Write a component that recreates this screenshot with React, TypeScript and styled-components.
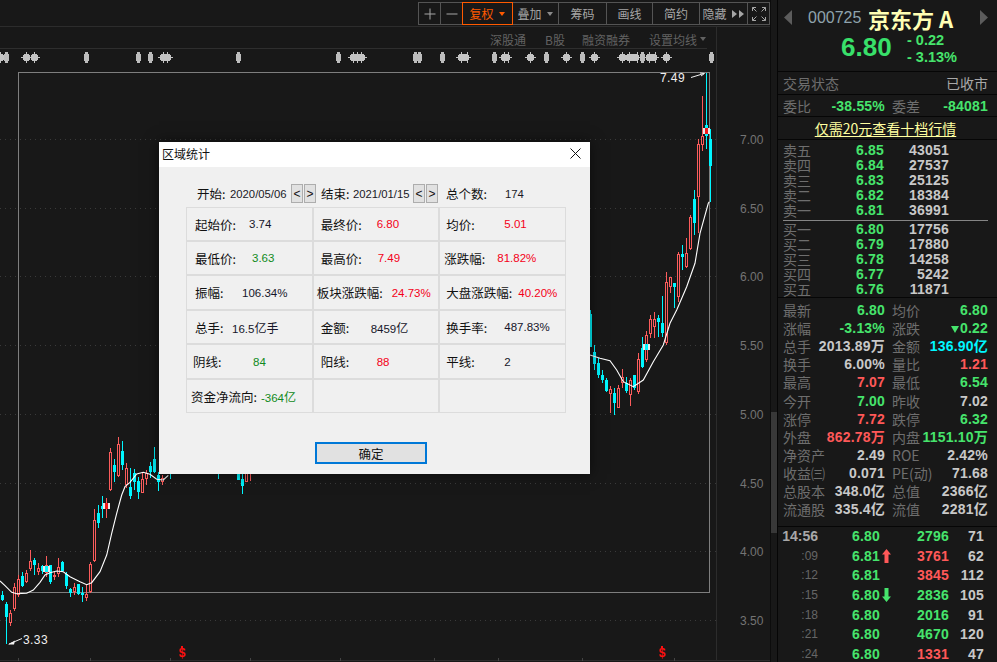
import React from "react";
import styled, { createGlobalStyle, css } from "styled-components";

const CJK = '"Noto Sans CJK SC", sans-serif';
const NUM = '"Liberation Sans", "Noto Sans CJK SC", sans-serif';
const GREEN = "#46e46c";
const RED = "#ff5858";
const CYAN = "#00f6ff";

const Global = createGlobalStyle`
  html, body { margin: 0; padding: 0; background: #181818; }
  * { box-sizing: border-box; }
`;

const Page = styled.div`
  position: relative;
  display: flex;
  width: 997px;
  height: 662px;
  overflow: hidden;
  background: #181818;
  font-family: ${CJK};
`;
const ChartColumn = styled.div`
  display: flex;
  flex-direction: column;
  width: 770px;
  flex: none;
`;
const Toolbar = styled.div`
  display: flex;
  justify-content: flex-end;
  height: 27px;
  flex: none;
  padding: 2px 0 0;
  border-bottom: 1px solid #2c2c2c;
`;
const ToolGroup = styled.div`
  display: flex;
  height: 23px;
  border: 1px solid #545454;
`;
const ToolButton = styled.div<{ $w: number; $active?: boolean }>`
  display: flex;
  align-items: center;
  justify-content: center;
  gap: 5px;
  width: ${(p) => p.$w}px;
  border-right: 1px solid #545454;
  font-size: 12px;
  color: #a6a6a6;
  &:last-child { border-right: none; }
  ${(p) =>
    p.$active &&
    css`
      color: #ff5a00;
      outline: 1px solid #ff5a00;
      border-right-color: transparent;
      position: relative;
    `}
`;
const Caret = styled.i<{ $color: string }>`
  display: block;
  width: 0;
  height: 0;
  border-left: 3px solid transparent;
  border-right: 3px solid transparent;
  border-top: 4px solid ${(p) => p.$color};
`;
const SubBar = styled.div`
  width: 717px;
  height: 22px;
  flex: none;
  border-right: 1px solid #2c2c2c;
`;
const SubTabs = styled.div`
  display: flex;
  justify-content: flex-end;
  align-items: center;
  gap: 19px;
  width: 707px;
  height: 22px;
  padding: 3px 1px 0 0;
  border-bottom: 1px solid #2e2e2e;
  font-size: 12px;
  color: #626262;
`;
const SubTab = styled.span`
  display: flex;
  align-items: center;
  gap: 3px;
`;
const LatinTab = styled(SubTab)`
  margin-right: -2px;
`;
const ChartSvg = styled.svg`
  display: block;
  width: 770px;
  height: 613px;
  flex: none;
`;
const ScrollStrip = styled.div`
  width: 7px;
  flex: none;
  padding-top: 412px;
  border-left: 1px solid #0c0c0c;
`;
const ScrollThumb = styled.div`
  height: 121px;
  background: #383838;
`;

const Panel = styled.div`
  display: flex;
  flex-direction: column;
  width: 220px;
  flex: none;
  border-left: 1px solid #060606;
  background: #181818;
`;
const Section = styled.div<{ $h: number }>`
  height: ${(p) => p.$h}px;
  flex: none;
  border-bottom: 1px solid #060606;
`;
const Head = styled(Section)`
  display: flex;
  flex-direction: column;
`;
const QuoteLine = styled.div`
  display: flex;
  align-items: center;
  height: 35px;
  padding-left: 6px;
  padding-right: 9px;
`;
const Code = styled.span`
  font: 16px ${NUM};
  color: #8fa3ad;
  margin-left: 16px;
  width: 60px;
`;
const Name = styled.span`
  font: 700 22px ${CJK};
  color: #ffffb4;
  flex: 1;
  white-space: pre;
  line-height: 1;
`;
const PriceLine = styled.div`
  display: flex;
  align-items: center;
  margin-top: -3px;
  padding-left: 63px;
`;
const BigPrice = styled.span`
  font: 700 26px ${NUM};
  color: #38e06a;
  width: 66px;
  padding-bottom: 3px;
`;
const Changes = styled.div`
  display: flex;
  flex-direction: column;
  margin-top: -1px;
  font: 700 14.5px/17px ${NUM};
  color: ${GREEN};
  white-space: pre;
`;
const InfoRow = styled(Section)`
  display: grid;
  grid-template-columns: 102px 96px;
  column-gap: 7px;
  padding-left: 5px;
  align-items: center;
`;
const Pair = styled.div`
  display: flex;
  justify-content: space-between;
  align-items: center;
  white-space: nowrap;
`;
const Label = styled.span`
  font-size: 14px;
  color: #6e6e6e;
  line-height: 18px;
`;
const Value = styled.span<{ $c?: string }>`
  font: 700 14px/18px ${NUM};
  letter-spacing: 0.2px;
  color: ${(p) => p.$c || "#c8c8c8"};
  white-space: nowrap;
`;
const StatusValue = styled.span`
  font-size: 14px;
  color: #a8a8a8;
`;
const Promo = styled(Section)`
  display: flex;
  align-items: center;
  justify-content: center;
  padding-right: 4px;
  font-size: 14px;
  color: #ffffa0;
  text-decoration: underline;
  text-underline-offset: 2px;
`;
const Book = styled(Section)`
  padding-top: 1px;
`;
const BookRow = styled.div`
  display: grid;
  grid-template-columns: 40px 61px 65px;
  height: 15px;
  padding-left: 5px;
  align-items: center;
  & > *:nth-child(n + 2) { text-align: right; }
`;
const BookLabel = styled.span`
  font-size: 14px;
  line-height: 15px;
  color: #6e6e6e;
`;
const BookDivider = styled.div`
  height: 1px;
  margin: 4px 9px -1px 5px;
  background: #858585;
`;
const Stats = styled(Section)`
  padding-top: 3px;
`;
const StatRow = styled.div`
  display: grid;
  grid-template-columns: 102px 96px;
  column-gap: 7px;
  height: 18.1px;
  padding-left: 5px;
  align-items: center;
`;
const SmallTri = styled.i`
  display: inline-block;
  width: 0;
  height: 0;
  margin-right: 1px;
  border-left: 4px solid transparent;
  border-right: 4px solid transparent;
  border-top: 7px solid ${GREEN};
`;
const Trades = styled.div`
  flex: 1;
  margin-top: -1px;
`;
const TradeRow = styled.div`
  display: grid;
  grid-template-columns: 40px 34px 36px 61px 35px;
  height: 19.7px;
  align-items: center;
`;
const TradeTime = styled.span<{ $main?: boolean }>`
  text-align: right;
  ${(p) =>
    p.$main
      ? css`font: 700 14px ${NUM}; color: #a8a8a8;`
      : css`font: 12px ${NUM}; color: #666;`}
`;
const TradePrice = styled.span`
  grid-column: 3;
  display: flex;
  align-items: center;
  gap: 2px;
  white-space: nowrap;
  & svg { flex: none; }
`;
const RightValue = styled(Value)`
  text-align: right;
`;

const Dialog = styled.div`
  position: absolute;
  left: 159px;
  top: 142px;
  width: 431px;
  height: 332px;
  background: #f0f0f0;
  box-shadow: 0 0 14px rgba(0, 0, 0, 0.55);
  color: #111;
`;
const TitleBar = styled.div`
  display: flex;
  align-items: center;
  justify-content: space-between;
  height: 25px;
  padding: 0 9px 2px 3px;
  background: #fff;
  font-size: 12px;
`;
const DialogBody = styled.div`
  padding: 17px 0 0 27px;
`;
const RangeRow = styled.div`
  display: flex;
  align-items: center;
  height: 19px;
  margin-bottom: 4px;
  font-size: 12.5px;
`;
const RangeText = styled.span<{ $w: number; $num?: boolean; $gap?: number }>`
  flex: none;
  width: ${(p) => p.$w}px;
  margin-left: ${(p) => p.$gap || 0}px;
  white-space: nowrap;
  ${(p) => p.$num && css`font: 11.3px ${NUM}; color: #1a1a26;`}
`;
const StepButton = styled.span`
  display: flex;
  align-items: center;
  justify-content: center;
  flex: none;
  width: 12px;
  height: 19px;
  margin-right: 1px;
  border: 1px solid #adadad;
  background: #e1e1e1;
  font: 12px ${NUM};
`;
const StatGrid = styled.div`
  display: grid;
  width: 380px;
  grid-template-columns: repeat(3, 1fr);
  grid-template-rows: 32px 32px 33px 32px 33px 32px;
  gap: 2px;
  padding: 1px;
  background: #dcdcdc;
`;
const Cell = styled.div<{ $pad: number }>`
  display: flex;
  align-items: center;
  padding-left: ${(p) => p.$pad}px;
  background: #f0f0f0;
  font-size: 12.5px;
  white-space: nowrap;
`;
const CellLabel = styled.span<{ $w: number }>`
  flex: none;
  width: ${(p) => p.$w}px;
`;
const CellValue = styled.span<{ $tone?: "red" | "green" }>`
  font: 11.5px ${NUM};
  color: ${(p) => (p.$tone === "red" ? "#f40018" : p.$tone === "green" ? "#0f8a20" : "#16162a")};
`;
const CnUnit = styled.span`
  font-family: ${CJK};
  font-size: 12px;
`;
const OkButton = styled.div`
  display: flex;
  align-items: center;
  justify-content: center;
  width: 112px;
  height: 22px;
  margin: 29px 0 0 129px;
  border: 2px solid #0078d7;
  background: #e1e1e1;
  font-size: 12.5px;
`;

type C = [number, number, number, number, number, "r" | "c"];
const leftCandles: C[] = [
  [7,513,543,524,540,"c"],[19,547,672,552,590,"c"],[31,570,617,580,608,"r"],[43,490,572,502,568,"r"],
  [55,465,532,478,525,"r"],[67,457,500,468,497,"c"],[79,450,490,460,487,"r"],[91,390,452,424,446,"r"],
  [103,413,465,420,434,"c"],[115,430,465,445,456,"r"],[127,435,462,438,452,"c"],[139,408,470,434,460,"r"],
  [151,435,492,436,486,"c"],[163,455,480,465,470,"r"],[175,413,472,442,462,"r"],[187,423,455,426,452,"c"],
  [199,455,507,462,498,"c"],[211,503,530,508,520,"c"],[223,490,525,500,515,"r"],[235,492,524,492,522,"c"],
  [247,500,546,520,524,"c"],[259,495,542,522,534,"r"],[271,425,518,432,516,"r"],[283,268,427,300,424,"r"],
  [295,255,323,280,308,"c"],[307,228,295,258,266,"c"],[319,235,293,250,266,"r"],[331,85,212,96,211,"r"],
  [343,118,185,135,155,"c"],[355,52,170,72,168,"r"],[367,63,150,93,135,"c"],[379,130,205,145,195,"r"],
  [391,145,236,202,228,"c"],[403,148,210,160,185,"c"],[415,170,236,183,215,"c"],[427,155,220,178,218,"r"],
  [439,150,195,160,178,"r"],[451,125,175,138,156,"c"],[463,82,160,117,155,"c"],[475,155,212,165,185,"c"],
  [487,165,195,175,185,"r"],[511,160,178,160,161,"c"],[655,160,178,160,161,"c"],[715,160,180,160,180,"c"],
  [727,160,222,178,198,"c"],[739,160,185,160,185,"r"],[751,160,183,160,161,"r"],
];
const rightCandles: C[] = [
  [31,750,862,762,862,"c"],[43,855,930,875,912,"c"],[55,895,953,908,945,"c"],[67,930,970,945,960,"c"],
  [79,955,997,960,992,"c"],[91,978,1060,988,1002,"r"],[103,985,1065,1000,1028,"c"],[115,975,1045,985,1043,"r"],
  [127,928,985,950,968,"r"],[139,950,1000,970,992,"c"],[151,955,1037,960,1005,"r"],[163,945,990,945,985,"c"],
  [175,880,1003,898,995,"r"],[187,830,925,865,920,"c"],[199,812,905,825,900,"r"],[211,765,835,778,823,"r"],
  [223,755,833,778,800,"r"],[235,765,830,775,787,"c"],[247,708,830,790,820,"c"],[259,635,855,667,850,"r"],
  [271,650,698,650,682,"r"],[283,670,745,670,681,"c"],[295,575,725,583,712,"r"],[307,555,630,582,590,"c"],
  [319,535,623,580,622,"r"],[331,465,570,472,568,"r"],[343,390,525,417,488,"c"],[355,237,520,253,412,"r"],
  [367,108,272,228,254,"r"],[379,38,268,195,227,"c"],[391,207,425,237,317,"c"],
];
const maLeft = [[0,483],[15,497],[35,517],[50,521],[80,520],[100,510],[120,487],[135,465],[150,458],[170,453],[190,455],[210,470],[240,485],[260,494],[275,488],[300,455],[320,405],[335,340],[350,280],[365,225],[375,200],[390,187],[410,162],[430,157],[450,163],[470,178],[490,180],[505,166]];
const maRight = [[30,885],[60,895],[90,902],[110,930],[130,965],[160,980],[190,960],[220,905],[250,855],[270,790],[290,750],[320,680],[345,610],[360,520],[385,430],[388,425]];

const Candles = ({ data, ox, oy }: { data: C[]; ox: number; oy: number }) => (
  <g shapeRendering="crispEdges">
    {data.map(([zx, wt, wb, bt, bb, k], i) => {
      const x = ox + Math.round((zx - 1) / 3);
      const col = k === "r" ? "#fb5c5c" : CYAN;
      const y = (v: number) => Math.round(oy + v / 3);
      const h = Math.max(1, y(bb) - y(bt));
      return (
        <g key={i}>
          <rect x={x} y={y(wt)} width={1} height={Math.max(1, y(wb) - y(wt))} fill={col} />
          <rect x={x - 1} y={y(bt)} width={3} height={h} fill={col} />
          {k === "r" && h > 2 && <rect x={x} y={y(bt) + 1} width={1} height={h - 2} fill="#181818" />}
        </g>
      );
    })}
  </g>
);

const Selected = ({ x, y, c }: { x: number; y: number; c: string }) => (
  <g shapeRendering="crispEdges">
    <rect x={x - 3} y={y} width={7} height={6} fill="#e9e9e9" />
    <rect x={x - 1} y={y} width={3} height={6} fill={c} />
  </g>
);

const Narrow = ({ x }: { x: number }) => (
  <g fill="#bdbdbd" shapeRendering="crispEdges">
    <rect x={x - 2} y={54} width={5} height={7} />
    <rect x={x - 1} y={52} width={3} height={11} />
  </g>
);
const Star = ({ x, w = 7 }: { x: number; w?: number }) => (
  <g fill="#c4c4c4" shapeRendering="crispEdges">
    <rect x={x - 3} y={55} width={w} height={5} />
    <rect x={x - 2} y={54} width={w - 2} height={7} />
    <rect x={x - 5} y={57} width={w + 4} height={1} />
    <rect x={x} y={52} width={1} height={11} />
    {w > 7 && <rect x={x + w - 5} y={52} width={1} height={11} />}
  </g>
);

const points = (d: number[][], ox: number, oy: number) =>
  d.map(([a, b]) => `${(ox + a / 3).toFixed(1)},${(oy + b / 3).toFixed(1)}`).join(" ");

const gridPrices = [
  ["7.00", 139], ["6.50", 208], ["6.00", 276], ["5.50", 345],
  ["5.00", 414], ["4.50", 483], ["4.00", 551], ["3.50", 620],
] as const;

const Chart = () => (
  <ChartSvg viewBox="0 49 770 613">
    {gridPrices.map(([t, y]) => (
      <g key={t}>
        <line x1={0} x2={720} y1={y + 0.5} y2={y + 0.5} stroke="#3a3a3a" strokeDasharray="1 4" />
        <text x={740} y={y + 4.5} fontFamily={NUM} fontSize={12} fill="#747474">{t}</text>
      </g>
    ))}
    <line x1={716.5} x2={716.5} y1={49} y2={660} stroke="#2c2c2c" />
    <line x1={0} x2={770} y1={660.5} y2={660.5} stroke="#2c2c2c" />
    {[18, 90, 170, 250, 340, 434, 498, 582, 674].map((x) => (
      <line key={x} x1={x + 0.5} x2={x + 0.5} y1={658} y2={661} stroke="#444" />
    ))}
    {[0, 26, 34, 163, 167, 353, 357, 361, 530, 566, 594, 622, 666].map((x) => <Star key={x} x={x} />)}
    <Star x={461} w={11} />
    <Star x={504} w={9} />
    <Star x={629} w={13} />
    <Star x={649} w={11} />
    {[6, 86, 138, 150, 238, 338, 415, 419, 442, 494, 546, 582, 642, 711].map((x) => <Narrow key={x} x={x} />)}
    <rect x={18.5} y={72.5} width={691} height={520} fill="none" stroke="#7e7e7e" />
    <Candles data={leftCandles} ox={0} oy={420} />
    <Candles data={rightCandles} ox={580} oy={60} />
    <Selected x={46} y={566} c={CYAN} />
    <Selected x={106} y={503} c="#f01818" />
    <Selected x={646} y={344} c={CYAN} />
    <Selected x={706} y={128} c="#f01818" />
    <polyline points={points(maLeft, 0, 420)} fill="none" stroke="#ffffff" strokeWidth={1.1} />
    <polyline points={points(maRight, 580, 60)} fill="none" stroke="#ffffff" strokeWidth={1.1} />
    <text x={660} y={82} fontFamily={NUM} fontSize={12} fill="#f0f0f0" letterSpacing={0.4}>7.49</text>
    <path d="M691 77.5 L704 73.5 M700 73 L704.5 73.5 L701 76" fill="none" stroke="#f0f0f0" />
    <text x={23} y={644} fontFamily={NUM} fontSize={12} fill="#f0f0f0" letterSpacing={0.4}>3.33</text>
    <path d="M22 638.5 L9 644" fill="none" stroke="#f0f0f0" />
    <path d="M8 644.5 L15 640.5 L14 644.5 Z" fill="#f0f0f0" />
    {[182, 662].map((x) => (
      <g key={x}>
        <rect x={x - 1} y={646} width={2} height={2} fill="#ff1010" />
        <text x={x} y={657} textAnchor="middle" fontFamily={NUM} fontWeight={700} fontSize={12} fill="#ff1010">$</text>
      </g>
    ))}
  </ChartSvg>
);

const sideArrow = (flip: boolean) => (
  <svg width="8" height="15" viewBox="0 0 8 15">
    <path d={flip ? "M0 0 L8 7.5 L0 15 Z" : "M8 0 L0 7.5 L8 15 Z"} fill="#5c5c5c" />
  </svg>
);

const sell = [["卖五","6.85","43051"],["卖四","6.84","27537"],["卖三","6.83","25125"],["卖二","6.82","18384"],["卖一","6.81","36991"]];
const buy = [["买一","6.80","17756"],["买二","6.79","17880"],["买三","6.78","14258"],["买四","6.77","5242"],["买五","6.76","11871"]];

const W = "#c8c8c8";
const stats: [string, React.ReactNode, string, string, React.ReactNode, string][] = [
  ["最新","6.80",GREEN,"均价","6.80",GREEN],
  ["涨幅","-3.13%",GREEN,"涨跌",<><SmallTri />0.22</>,GREEN],
  ["总手","2013.89万",W,"金额","136.90亿",CYAN],
  ["换手","6.00%",W,"量比","1.21",RED],
  ["最高","7.07",RED,"最低","6.54",GREEN],
  ["今开","7.00",GREEN,"昨收","7.02",W],
  ["涨停","7.72",RED,"跌停","6.32",GREEN],
  ["外盘","862.78万",RED,"内盘","1151.10万",GREEN],
  ["净资产","2.49",W,"ROE","2.42%",W],
  ["收益㈢","0.071",W,"PE(动)","71.68",W],
  ["总股本","348.0亿",W,"总值","2366亿",W],
  ["流通股","335.4亿",W,"流值","2281亿",W],
];

const trades: [string, string, "up" | "down" | "", string, string, string][] = [
  ["14:56","6.80","","2796",GREEN,"71"],
  [":09","6.81","up","3761",RED,"62"],
  [":12","6.81","","3845",RED,"112"],
  [":15","6.80","down","2836",GREEN,"105"],
  [":18","6.80","","2016",GREEN,"91"],
  [":21","6.80","","4670",GREEN,"120"],
  [":24","6.80","","1331",RED,"47"],
];

const TradeArrow = ({ dir }: { dir: "up" | "down" }) => (
  <svg width="9" height="14" viewBox="0 0 9 14">
    <path
      d={dir === "up" ? "M4.5 0 L9 5.5 L6.5 5.5 L6.5 14 L2.5 14 L2.5 5.5 L0 5.5 Z" : "M4.5 14 L9 8.5 L6.5 8.5 L6.5 0 L2.5 0 L2.5 8.5 L0 8.5 Z"}
      fill={dir === "up" ? RED : GREEN}
    />
  </svg>
);

type Tone = "red" | "green" | undefined;
const col1 = 8, col2 = 7, col3 = 6;
const cells: [number, number, string, React.ReactNode, Tone][] = [
  [col1,54,"起始价:","3.74",undefined],[col2,56,"最终价:","6.80","red"],[col3,58,"均价:","5.01","red"],
  [col1,57,"最低价:","3.63","green"],[col2,57,"最高价:","7.49","red"],[col3 - 2,53,"涨跌幅:","81.82%","red"],
  [col1,47,"振幅:","106.34%",undefined],[col2 - 4,75,"板块涨跌幅:","24.73%","red"],[col3,72,"大盘涨跌幅:","40.20%","red"],
  [col1,37,"总手:",<>16.5<CnUnit>亿手</CnUnit></>,undefined],[col2,50,"金额:",<>8459<CnUnit>亿</CnUnit></>,undefined],[col3,58,"换手率:","487.83%",undefined],
  [col1 - 2,60,"阴线:","84","green"],[col2,56,"阳线:","88","red"],[col3,58,"平线:","2",undefined],
  [col1 - 4,70,"资金净流向:",<>-364<CnUnit>亿</CnUnit></>,"green"],
];

export default function App() {
  return (
    <Page>
      <Global />
      <ChartColumn>
        <Toolbar>
          <ToolGroup>
            <ToolButton $w={22}>
              <svg width="12" height="12" viewBox="0 0 12 12"><path d="M6 0.5V11.5M0.5 6H11.5" stroke="#a6a6a6" /></svg>
            </ToolButton>
            <ToolButton $w={22}>
              <svg width="12" height="12" viewBox="0 0 12 12"><path d="M0.5 6H11.5" stroke="#a6a6a6" /></svg>
            </ToolButton>
            <ToolButton $w={49} $active>复权<Caret $color="#ff5a00" /></ToolButton>
            <ToolButton $w={47}>叠加<Caret $color="#8a8a8a" /></ToolButton>
            <ToolButton $w={48}>筹码</ToolButton>
            <ToolButton $w={46}>画线</ToolButton>
            <ToolButton $w={47}>简约</ToolButton>
            <ToolButton $w={48}>
              隐藏
              <svg width="13" height="8" viewBox="0 0 13 8"><path d="M0 0L5 4L0 8ZM7 0L12 4L7 8Z" fill="#a6a6a6" /></svg>
            </ToolButton>
            <ToolButton $w={21}>
              <svg width="14" height="14" viewBox="0 0 14 14" fill="none" stroke="#a6a6a6">
                <path d="M0.5 4V0.5H4M10 0.5H13.5V4M13.5 10V13.5H10M4 13.5H0.5V10M0.5 0.5L4.5 4.5M13.5 0.5L9.5 4.5M13.5 13.5L9.5 9.5M0.5 13.5L4.5 9.5" />
              </svg>
            </ToolButton>
          </ToolGroup>
        </Toolbar>
        <SubBar>
          <SubTabs>
            <SubTab>深股通</SubTab>
            <LatinTab>B股</LatinTab>
            <SubTab>融资融券</SubTab>
            <SubTab>设置均线<Caret $color="#626262" /></SubTab>
          </SubTabs>
        </SubBar>
        <Chart />
      </ChartColumn>
      <ScrollStrip><ScrollThumb /></ScrollStrip>
      <Panel>
        <Head $h={72}>
          <QuoteLine>
            {sideArrow(false)}
            <Code>000725</Code>
            <Name>京东方 A</Name>
            {sideArrow(true)}
          </QuoteLine>
          <PriceLine>
            <BigPrice>6.80</BigPrice>
            <Changes>
              <span>- 0.22</span>
              <span>- 3.13%</span>
            </Changes>
          </PriceLine>
        </Head>
        <InfoRow $h={23}>
          <Label>交易状态</Label>
          <Pair><span /><StatusValue>已收市</StatusValue></Pair>
        </InfoRow>
        <InfoRow $h={22}>
          <Pair><Label>委比</Label><Value $c={GREEN}>-38.55%</Value></Pair>
          <Pair><Label>委差</Label><Value $c={GREEN}>-84081</Value></Pair>
        </InfoRow>
        <Promo $h={23}>仅需20元查看十档行情</Promo>
        <Book $h={158}>
          {sell.map(([a, b, c]) => (
            <BookRow key={a}><BookLabel>{a}</BookLabel><Value $c={GREEN}>{b}</Value><Value>{c}</Value></BookRow>
          ))}
          <BookDivider />
          {buy.map(([a, b, c]) => (
            <BookRow key={a}><BookLabel>{a}</BookLabel><Value $c={GREEN}>{b}</Value><Value>{c}</Value></BookRow>
          ))}
        </Book>
        <Stats $h={229}>
          {stats.map(([a, b, c, d, e, f]) => (
            <StatRow key={a}>
              <Pair><Label>{a}</Label><Value $c={c}>{b}</Value></Pair>
              <Pair><Label>{d}</Label><Value $c={f}>{e}</Value></Pair>
            </StatRow>
          ))}
        </Stats>
        <Trades>
          {trades.map(([t, p, dir, v, vc, n]) => (
            <TradeRow key={t}>
              <TradeTime $main={t.length > 3}>{t}</TradeTime>
              <TradePrice>
                <Value $c={GREEN}>{p}</Value>
                {dir && <TradeArrow dir={dir} />}
              </TradePrice>
              <RightValue $c={vc}>{v}</RightValue>
              <RightValue>{n}</RightValue>
            </TradeRow>
          ))}
        </Trades>
      </Panel>

      <Dialog>
        <TitleBar>
          区域统计
          <svg width="11" height="11" viewBox="0 0 11 11"><path d="M0.5 0.5L10.5 10.5M10.5 0.5L0.5 10.5" stroke="#111" /></svg>
        </TitleBar>
        <DialogBody>
          <RangeRow>
            <RangeText $w={11} />
            <RangeText $w={33}>开始:</RangeText>
            <RangeText $w={61} $num>2020/05/06</RangeText>
            <StepButton>&lt;</StepButton>
            <StepButton>&gt;</StepButton>
            <RangeText $w={32} $gap={4}>结束:</RangeText>
            <RangeText $w={60} $num>2021/01/15</RangeText>
            <StepButton>&lt;</StepButton>
            <StepButton>&gt;</StepButton>
            <RangeText $w={59} $gap={7}>总个数:</RangeText>
            <RangeText $w={30} $num>174</RangeText>
          </RangeRow>
          <StatGrid>
            {cells.map(([pad, w, label, value, tone]) => (
              <Cell key={label} $pad={pad}>
                <CellLabel $w={w}>{label}</CellLabel>
                <CellValue $tone={tone}>{value}</CellValue>
              </Cell>
            ))}
            <Cell $pad={0} />
            <Cell $pad={0} />
          </StatGrid>
          <OkButton>确定</OkButton>
        </DialogBody>
      </Dialog>
    </Page>
  );
}
